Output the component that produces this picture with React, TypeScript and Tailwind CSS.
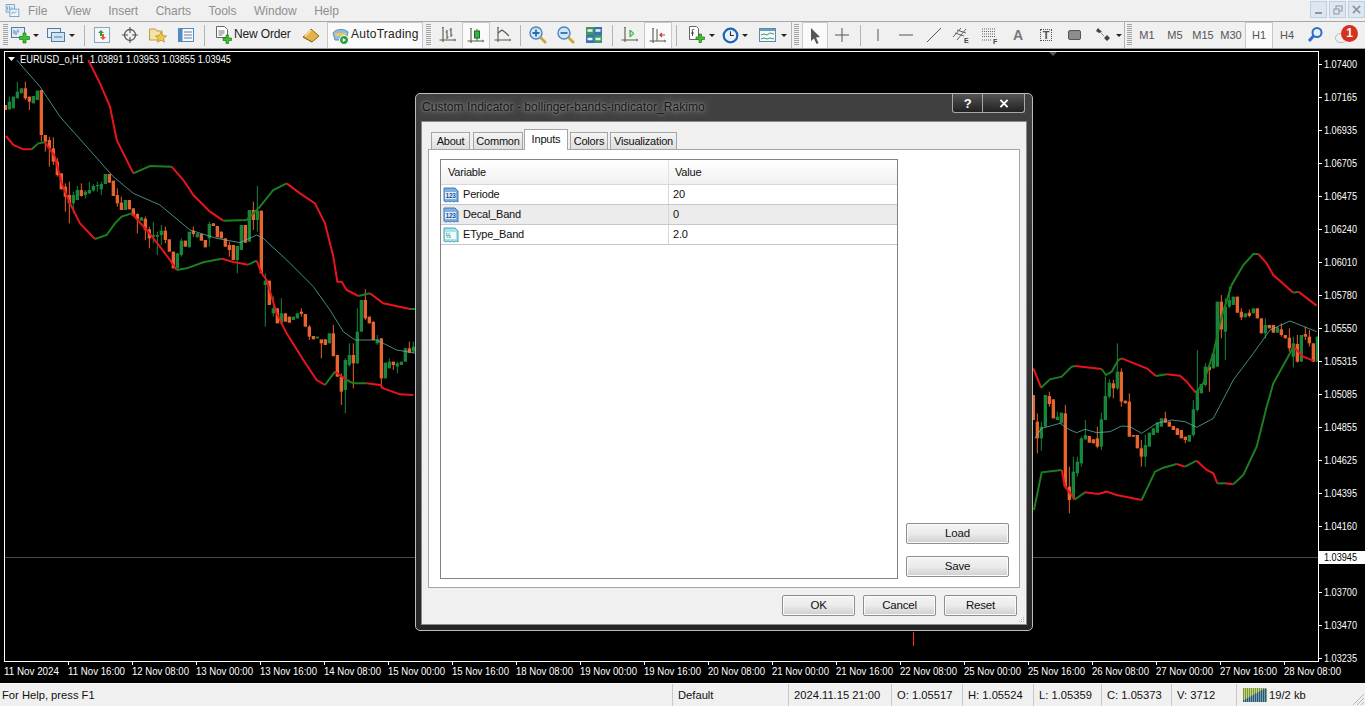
import React from "react";

type C = [number, "g" | "o", number, number, number?, number?];
const L: C[] = [[16,"o",135,150],[28,"g",125,148,110,150],[40,"g",110,145],[52,"g",95,115,65,115],[64,"g",85,100],[76,"o",85,115,65,120],[88,"o",110,125,110,150],[100,"g",108,130],[112,"g",92,120],[124,"o",90,225,90,245],[136,"o",225,245,225,275],[148,"o",240,265,230,320],[160,"o",265,305,232,315],[172,"o",305,345,295,350],[184,"o",340,388],[196,"o",380,410,370,455],[208,"o",405,430,365,490],[220,"g",405,430,395,460],[232,"g",390,420,378,420],[244,"o",390,408,370,410],[256,"g",395,405,390,415],[268,"g",390,400,365,402],[280,"g",378,392,372,395],[292,"g",375,379,365,395],[304,"g",372,388,365,405],[316,"g",342,372],[328,"o",342,368],[340,"o",362,408],[352,"o",405,430,385,440],[364,"o",428,450,410,450],[376,"g",420,450],[388,"o",420,448],[400,"o",445,468],[412,"o",462,478,460,520],[424,"g",472,482],[436,"o",476,510,470,540],[448,"o",508,535,500,565],[460,"g",525,530,485,550],[472,"g",525,530,515,585],[484,"g",512,525,495,555],[496,"o",512,540,500,550],[508,"o",538,575],[520,"o",575,625],[532,"g",580,625],[544,"g",542,585,535,590],[556,"o",542,560],[568,"g",515,562],[580,"o",512,522,500,530],[592,"g",520,532],[604,"o",522,542],[616,"o",540,562],[628,"g",492,535,485,560],[640,"o",490,498],[652,"o",498,532],[664,"o",515,535],[676,"o",535,560],[688,"o",555,570,545,590],[700,"o",555,600],[712,"g",558,600,558,640],[724,"g",495,570],[736,"o",495,548],[748,"g",450,545],[760,"o",450,480,425,510],[772,"g",452,480,378,515],[784,"o",452,640],[796,"g",662,675,640,800],[808,"o",662,735],[820,"g",745,760,710,770],[832,"o",745,790],[844,"g",760,790,715,795],[856,"o",760,785],[868,"o",770,788],[880,"g",770,780],[892,"g",760,775],[904,"o",755,762,745,770],[916,"o",762,800],[928,"o",800,830,795,840],[940,"o",828,838],[952,"g",830,835],[964,"o",838,850,840,895],[976,"o",838,855],[988,"g",820,850],[1000,"o",820,888,795,890],[1012,"o",885,950],[1024,"o",950,995,940,1035],[1036,"g",900,990,895,1060],[1048,"g",885,915,850,920],[1060,"o",885,910,850,985],[1072,"g",815,910,745,912],[1084,"g",720,815],[1096,"o",720,775,688,780],[1108,"o",770,790],[1120,"o",785,840],[1132,"g",838,850,825,855],[1144,"o",835,955,835,985],[1156,"g",908,955],[1168,"g",905,925,895,925],[1180,"o",905,915,905,930],[1192,"g",910,920,905,940],[1204,"g",905,915],[1216,"g",865,905],[1228,"o",865,878,845,880],[1240,"g",860,875,845,880]];

const R: C[] = [[10,"o",465,540],[22,"o",545,595,520,640],[34,"g",560,595,545,632],[46,"g",465,560],[58,"o",468,492,455,500],[70,"o",478,535],[82,"g",530,540,515,540],[94,"g",518,550],[106,"o",520,740,495,745],[118,"o",740,780,680,820],[130,"g",695,775,650,780],[142,"g",665,700,650,710],[154,"g",595,670,590,680],[166,"g",585,598,540,600],[178,"o",588,608],[190,"o",598,610],[202,"o",595,620,560,625],[214,"g",538,620,518,630],[226,"g",468,540,410,540],[238,"g",428,470,418,475],[250,"o",430,445,420,475],[262,"g",395,445,310,450],[274,"o",395,485,385,500],[286,"o",482,490],[298,"o",485,590,460,590],[310,"o",585,590],[322,"o",585,625],[334,"o",625,650,600,680],[346,"g",615,650,585,680],[358,"g",578,620],[370,"g",565,585],[382,"g",548,578],[394,"g",535,560],[406,"o",535,548,515,548],[418,"o",545,560],[430,"o",558,570],[442,"o",565,585],[454,"o",570,595],[466,"o",590,600,590,610],[478,"g",585,605],[490,"g",508,585,480,590],[502,"g",450,510,330,515],[514,"g",432,460],[526,"g",380,435,370,440],[538,"o",380,390,375,455],[550,"g",340,385],[562,"g",185,380],[574,"o",185,268,165,295],[586,"g",200,275,175,360],[598,"g",180,200,140,205],[610,"g",170,195],[622,"o",170,218],[634,"o",215,232,205,240],[646,"g",220,232],[658,"o",218,228,208,232],[670,"g",205,220],[682,"o",205,235],[694,"o",235,280],[706,"g",255,280,235,295],[718,"o",255,265],[730,"o",255,278],[742,"g",262,278],[754,"o",268,285,250,290],[766,"o",285,295],[778,"o",293,325,265,335],[790,"g",310,350,290,382],[802,"o",312,365,285,368],[814,"g",285,365],[826,"o",282,290,260,300],[838,"o",290,310,270,320],[850,"o",310,365],[862,"g",290,365]];

const RED = "#e8141c";
const GRN = "#1c7f1f";
const MID = "#62bdb4";
const bandsL: [string, string][] = [
  [RED,"265,0 300,70 330,140 350,240 400,340"],[GRN,"400,340 450,318 515,320"],[RED,"515,320 550,360 580,405 630,455 670,482"],[GRN,"670,482 740,480 780,440 820,390 860,370"],[RED,"860,370 900,400 945,430 975,490 1000,590 1012,665 1025,665 1040,690 1075,708"],[GRN,"1075,708 1110,700"],[RED,"1110,700 1150,730 1230,747"],[GRN,"1230,747 1250,747"],
  [RED,"18,228 40,255 70,268 95,268"],[GRN,"95,268 115,250 135,247"],[RED,"135,247 165,290 185,370 210,430 240,490 285,537"],[GRN,"285,537 320,525 345,490 365,470 395,460"],[RED,"395,460 440,510 480,560 510,600 530,630"],[GRN,"530,630 560,625 610,607 665,596"],[RED,"665,596 700,606 745,614"],[GRN,"745,614 770,602"],[RED,"770,602 785,640 800,660 830,760 860,820 910,900 950,960 975,975"],[GRN,"975,975 1005,935"],[RED,"1005,935 1040,960"],[GRN,"1040,960 1060,970 1100,970"],[RED,"1100,970 1140,975 1150,985 1200,1003 1240,1005"],
];
const bandsR: [string, string][] = [
  [RED,"10,385 20,410 33,443"],[GRN,"33,443 60,418 95,410 125,380 135,378"],[RED,"135,378 215,387"],[GRN,"215,387 228,405 245,395 265,360 275,355"],[RED,"275,355 350,385 378,408"],[GRN,"378,408 410,403"],[RED,"410,403 450,407 470,425 497,458"],[GRN,"497,458 520,430 550,340 575,230 605,135 640,75 670,42 685,42"],[RED,"685,42 710,70 730,105 790,158"],[GRN,"790,158 805,155"],[RED,"805,155 860,197"],
  [GRN,"12,810 35,697 95,690"],[RED,"95,690 105,740 135,778"],[GRN,"135,778 165,757"],[RED,"165,757 205,762 230,755 260,765 335,780"],[GRN,"335,780 375,695 400,683 440,672"],[RED,"440,672 465,680"],[GRN,"465,680 500,662"],[RED,"500,662 530,690 550,700 562,730"],[GRN,"562,730 585,730"],[RED,"585,730 610,733"],[GRN,"610,733 640,705 680,620 710,500 730,430 780,340 790,320"],[RED,"790,320 820,350 850,362"],
];

const prices: [string, number][] = [["1.07400",64],["1.07165",97],["1.06935",130],["1.06705",163],["1.06475",196],["1.06240",229],["1.06010",262],["1.05780",295],["1.05550",328],["1.05315",361],["1.05085",394],["1.04855",427],["1.04625",460],["1.04395",493],["1.04160",526],["1.03700",592],["1.03470",625],["1.03235",658]];
const dates = ["11 Nov 2024","11 Nov 16:00","12 Nov 08:00","13 Nov 00:00","13 Nov 16:00","14 Nov 08:00","15 Nov 00:00","15 Nov 16:00","18 Nov 08:00","19 Nov 00:00","19 Nov 16:00","20 Nov 08:00","21 Nov 00:00","21 Nov 16:00","22 Nov 08:00","25 Nov 00:00","25 Nov 16:00","26 Nov 08:00","27 Nov 00:00","27 Nov 16:00","28 Nov 08:00"];

function Candles({ data }: { data: C[] }) {
  return (
    <>
      {data.map(([x, k, a, b, hi, lo], i) => {
        const col = k === "g" ? "#14873c" : "#e8642c";
        return (
          <g key={i}>
            <line x1={x} x2={x} y1={hi ?? a} y2={lo ?? b} stroke={col} strokeWidth={3} />
            <rect x={x - 5} y={a} width={10} height={b - a} fill={col} />
          </g>
        );
      })}
    </>
  );
}

function Chart() {
  return (
    <svg viewBox="0 49 1365 634" className="block w-[1365px] h-[634px] bg-black" style={{ fontFamily: "'Liberation Sans',sans-serif" }}>
      <g clipPath="url(#plot)">
        <line x1="5" x2="1318" y1="557.5" y2="557.5" stroke="#4a4a4a" />
        <g transform="translate(0,60) scale(0.33333)">
          <Candles data={L} />
          <polyline points="50,0 120,80 180,170 260,260 340,350 400,400 480,435 570,510 650,535 720,548 770,525 790,535 860,600 940,680 990,750 1030,815 1065,840 1130,840 1190,870 1250,880" fill="none" stroke={MID} strokeWidth="2.2" />
          {bandsL.map(([c, p], i) => <polyline key={i} points={p} fill="none" stroke={c} strokeWidth="6" />)}
        </g>
        <g transform="translate(1030,240) scale(0.33333)">
          <Candles data={R} />
          <polyline points="14,595 35,565 90,550 120,570 140,578 165,568 200,578 240,575 275,558 300,560 335,580 380,550 425,540 465,545 500,562 550,535 610,420 670,340 720,270 780,243 860,275" fill="none" stroke={MID} strokeWidth="2.2" />
          {bandsR.map(([c, p], i) => <polyline key={i} points={p} fill="none" stroke={c} strokeWidth="6" />)}
        </g>
        <rect x="913" y="632" width="1" height="14" fill="#ff3020" />
      </g>
      <defs><clipPath id="plot"><rect x="5" y="52" width="1313" height="608" /></clipPath></defs>
      <line x1="4" x2="1318.5" y1="51.5" y2="51.5" stroke="#fff" />
      <line x1="4.5" x2="4.5" y1="51" y2="661" stroke="#fff" />
      <line x1="1318.5" x2="1318.5" y1="51" y2="661" stroke="#fff" />
      <line x1="4" x2="1319" y1="661.5" y2="661.5" stroke="#fff" />
      <polygon points="1049,52 1057,52 1053,56" fill="#555" />
      <polygon points="8,57 15,57 11.5,61" fill="#fff" />
      <text x="20" y="63" fill="#fff" fontSize="10" textLength="64" lengthAdjust="spacingAndGlyphs">EURUSD_o,H1</text>
      <text x="90" y="63" fill="#fff" fontSize="10" textLength="141" lengthAdjust="spacingAndGlyphs">1.03891 1.03953 1.03855 1.03945</text>
      {prices.map(([p, y]) => (
        <g key={p}>
          <line x1="1319" x2="1322" y1={y + 0.5} y2={y + 0.5} stroke="#fff" />
          <text x="1324" y={y + 3.5} fill="#fff" fontSize="10" textLength="33" lengthAdjust="spacingAndGlyphs">{p}</text>
        </g>
      ))}
      <rect x="1319" y="551" width="46" height="13" fill="#fff" />
      <text x="1324" y="561" fill="#000" fontSize="10" textLength="33" lengthAdjust="spacingAndGlyphs">1.03945</text>
      {dates.map((d, i) => (
        <g key={d}>
          <line x1={68.5 + (i - 1) * 64} x2={68.5 + (i - 1) * 64} y1="662" y2="665" stroke="#fff" opacity={i === 0 ? 0 : 1} />
          <text x={i === 0 ? 4 : 68 + (i - 1) * 64} y="675" fill="#fff" fontSize="10" textLength={i === 0 ? 55 : 57} lengthAdjust="spacingAndGlyphs">{d}</text>
        </g>
      ))}
    </svg>
  );
}

const S = ({ children, vb = "0 0 20 20", c = "w-5 h-5" }: { children: React.ReactNode; vb?: string; c?: string }) => (
  <svg viewBox={vb} className={c} fill="none">{children}</svg>
);
const Caret = () => <span className="ml-[3px] w-0 h-0 border-x-[3px] border-t-[3px] border-x-transparent border-t-[#222]" />;
const Sep = () => <div className="w-[8px] h-[21px] flex justify-center"><div className="w-px h-full bg-[#b4b4b4]" /></div>;
const Grip = () => <div className="w-[5px] h-[22px] bg-[repeating-linear-gradient(#a4a4a4_0_1px,transparent_1px_2px)]" />;

const Plus = () => <path d="M12 9.500h3.500V6H18.500v3.500H22v3h-3.500V16h-3v-3.500H12z" transform="translate(-2.500 2)" fill="#3dc22f" stroke="#1b7d16" strokeWidth=".7" />;
const Bars = ({ kids }: { kids: React.ReactNode }) => (
  <S><path d="M5 3v14M1.500 15h15" stroke="#5a5a4a" strokeWidth="1.1" />{kids}<path d="M16 14l2 1-2 1M4 3l1-1 1 1" stroke="#5a5a4a" strokeWidth=".8" /></S>
);

function Toolbar() {
  const slot = "w-[28px] h-full flex items-center justify-center";
  const active = "bg-[#fafafa] border border-b-0 border-[#c9c9c9]";
  const tf = "w-[28px] h-full flex items-center justify-center text-[11px] text-[#555]";
  return (
    <div className="flex items-center h-[26px] bg-[#f0f0f0] text-[#222]">
      <div className="w-[10px] flex justify-center"><Grip /></div>
      <div className="w-[34px] flex items-center">
        <S><rect x="1.500" y="2.500" width="13" height="10" fill="#dfeaf5" stroke="#4e7ea8" /><path d="M4 5v4M6 6v4M8 4.500v3" stroke="#4e7ea8" /><Plus /></S><Caret />
      </div>
      <div className="w-[36px] flex items-center pl-[2px]">
        <S><rect x="1.500" y="3.500" width="13" height="9" fill="#e6eff8" stroke="#4e7ea8" /><rect x="5.500" y="7.500" width="13" height="9" fill="#d3e2f1" stroke="#4e7ea8" /><path d="M8 12h8" stroke="#4e7ea8" /></S><Caret />
      </div>
      <Sep />
      <div className={slot}><S><rect x="2.500" y="2.500" width="15" height="15" fill="#f2f6fb" stroke="#8aa6c2" /><path d="M9 5L6 8h2v3h2V8h2z" fill="#2d9f36" /><path d="M11 15l3-3h-2V9h-2v3H8z" fill="#e0582b" /></S></div>
      <div className={slot}><S><circle cx="10" cy="10" r="5.500" stroke="#555" strokeWidth="1.3" /><path d="M10 2v6M10 12v6M2 10h6M12 10h6" stroke="#555" strokeWidth="1.1" /></S></div>
      <div className={slot}><S><path d="M1.500 4h6l1.500 2h5v9H1.500z" fill="#f7e3a1" stroke="#b89a50" /><path d="M13 7l1.700 3.600 3.800.4-2.900 2.500.9 3.700-3.500-2-3.500 2 .9-3.700L7.500 11l3.800-.4z" fill="#f3c93f" stroke="#a98a2a" strokeWidth=".7" /></S></div>
      <div className={slot}><S><rect x="2.500" y="3.500" width="15" height="13" fill="#f5f9fd" stroke="#4f8cc2" /><rect x="3" y="4" width="3.500" height="12" fill="#4f8cc2" /><path d="M8 7h8M8 10h8M8 13h8" stroke="#6b7f92" /></S></div>
      <Sep />
      <div className="w-[90px] flex items-center pl-[5px] gap-[1px]">
        <S><path d="M3.500 1.500h8l3 3v8h-11z" fill="#fff" stroke="#666" /><path d="M5.500 6h6M5.500 8h6M5.500 10h4" stroke="#777" /><path d="M10 13h3v-3h2.500v3h3v2.500h-3v3H13v-3h-3z" fill="#3dc22f" stroke="#1b7d16" strokeWidth=".7" /></S>
        <span className="text-[12px] tracking-[-0.15px] whitespace-nowrap mb-[2px]">New Order</span>
      </div>
      <div className="w-[26px] flex justify-center"><S><path d="M2 12l8-8 8 7-7 6z" fill="#e6b04a" stroke="#8a6a20" /><path d="M2 12l9 5" stroke="#8a6a20" /><path d="M4 11l6-6" stroke="#f7dc8e" strokeWidth="2" /></S></div>
      <div className={`w-[96px] h-full ml-[3px] flex items-center pl-[2px] gap-[1px] ${active}`}>
        <S><path d="M3 7c2-4 11-5 15-1l-2 8H5z" fill="#8cc0e2" stroke="#5f8fb0" /><path d="M4 7h13l-3 3H6z" fill="#edc75b" /><circle cx="14" cy="14" r="4.500" fill="#2d9f36" stroke="#fff" /><path d="M12.700 12l3.400 2-3.400 2z" fill="#fff" /></S>
        <span className="text-[12px] whitespace-nowrap tracking-[0.25px] mb-[3px]">AutoTrading</span>
      </div>
      <div className="w-[11px] flex justify-center"><Grip /></div>
      <div className={slot}><Bars kids={<path d="M9 5v9M7.500 7H9M9 12h1.500M13 3v9M11.500 5H13M13 10h1.500" stroke="#5a5a4a" strokeWidth="1.1" />} /></div>
      <div className={`${slot} ${active}`}><Bars kids={<><path d="M11 3v12" stroke="#555" /><rect x="8.500" y="5" width="5" height="7" fill="#2fb545" stroke="#1b6d2a" /></>} /></div>
      <div className="w-[26px] h-full flex items-center justify-center"><Bars kids={<path d="M5 8l4-3 4 3 3 3" stroke="#5a5a4a" strokeWidth="1.1" />} /></div>
      <Sep />
      <div className={slot}><S><circle cx="8" cy="8" r="6" fill="#cfe6fb" stroke="#4f86bb" strokeWidth="1.4" /><path d="M8 4.500v7M4.500 8h7" stroke="#2e6ea8" strokeWidth="1.800" /><path d="M12.500 12.500l5.500 5.500" stroke="#c9a63a" strokeWidth="2.600" /></S></div>
      <div className={slot}><S><circle cx="8" cy="8" r="6" fill="#cfe6fb" stroke="#4f86bb" strokeWidth="1.4" /><path d="M4.500 8h7" stroke="#2e6ea8" strokeWidth="1.800" /><path d="M12.500 12.500l5.500 5.500" stroke="#c9a63a" strokeWidth="2.600" /></S></div>
      <div className={slot}><S><rect x="2" y="2" width="8" height="8" fill="#3a9a62" /><rect x="10" y="2" width="8" height="8" fill="#3b70b4" /><rect x="2" y="10" width="8" height="8" fill="#3b70b4" /><rect x="10" y="10" width="8" height="8" fill="#3a9a62" /><path d="M3.500 5.500h5M11.500 5.500h5M3.500 14h5M11.500 14h5" stroke="#eaf3f5" strokeWidth="2.500" /></S></div>
      <Sep />
      <div className={slot}><Bars kids={<path d="M10 5l4 3.500-4 3.500z" fill="#b5e6a5" stroke="#2d9f36" />} /></div>
      <div className={`${slot} ${active}`}><Bars kids={<><path d="M9 3v12" stroke="#555" /><path d="M12 9h5M14 7l-2 2 2 2" stroke="#c43a3a" strokeWidth="1.200" /></>} /></div>
      <Sep />
      <div className="w-[36px] flex items-center pl-[6px]"><S><path d="M3.500 1.500h7l2 2v11h-9z" fill="#fff" stroke="#666" /><path d="M6 6c0-2 2-2 2-1M5 8h3M6.500 6v5" stroke="#444" /><path d="M10 12h3V9h2.500v3h3v2.500h-3v3H13v-3h-3z" fill="#3dc22f" stroke="#1b7d16" strokeWidth=".7" /></S><Caret /></div>
      <div className="w-[36px] flex items-center pl-[6px]"><S c="w-[17px] h-[17px]"><circle cx="10" cy="10" r="8" fill="#e8f1fa" stroke="#1e64b4" strokeWidth="2.600" /><path d="M10 5v5h4" stroke="#333" strokeWidth="1.300" /></S><Caret /></div>
      <div className="w-[36px] flex items-center pl-[6px]"><S><rect x="1.500" y="3.500" width="16" height="13" fill="#f3f8fc" stroke="#5c8aa8" /><path d="M2 4h15v2H2z" fill="#6a9cc0" /><path d="M3 10l3-1 3 1 3-2 4 1M3 14l3-1 3 1 3-1 4 1" stroke="#3f9a63" /></S><Caret /></div>
      <div className="w-[14px] flex items-center justify-center gap-[2px]"><div className="w-px h-[26px] bg-[#b4b4b4]" /><Grip /></div>
      <div className={`w-[26px] h-full flex items-center justify-center ${active}`}><S><path d="M6 2l9 9-4 .5 2.500 5.500-2 1L9 12.500 6 15z" fill="#555" /></S></div>
      <div className={slot}><S><path d="M10 3v14M3 10h14" stroke="#555" /></S></div>
      <Sep />
      <div className={slot}><S><path d="M10 4v12" stroke="#555" /></S></div>
      <div className={slot}><S><path d="M3 10h14" stroke="#555" /></S></div>
      <div className={slot}><S><path d="M3 17L17 3" stroke="#555" /></S></div>
      <div className={slot}><S><path d="M1 12L9 3M5 15l9-11M3 8l9 3M5 5l9 3" stroke="#555" strokeWidth=".9" /><text x="12" y="18" fontSize="7" fontWeight="700" fill="#444" fontFamily="'Liberation Sans',sans-serif">E</text></S></div>
      <div className={slot}><S><path d="M2 4h14M2 6.500h14M2 9h14M2 11.500h14M2 15h10" stroke="#666" strokeDasharray="1 1" /><text x="13" y="19" fontSize="7" fontWeight="700" fill="#444" fontFamily="'Liberation Sans',sans-serif">F</text></S></div>
      <div className={`${slot} font-bold text-[14px] text-[#777]`}>A</div>
      <div className={slot}><div className="w-[12px] h-[12px] border border-dotted border-[#555] text-[11px] font-bold text-[#555] leading-[11px] text-center">T</div></div>
      <div className={slot}><div className="w-[13px] h-[10px] rounded-[2px] bg-[#8d8d8d] border border-[#555]" /></div>
      <div className="w-[35px] flex items-center pl-[5px]"><S><path d="M5 3l4 4-3 1-3-2zM14 10l3 3-3 3-3-3z" fill="#444" /><path d="M8 8l3 3" stroke="#888" /></S><Caret /></div>
      <div className="w-[10px] flex items-center justify-center gap-[2px]"><div className="w-px h-[26px] bg-[#b4b4b4]" /><Grip /></div>
      <div className={tf}>M1</div>
      <div className={tf}>M5</div>
      <div className={tf}>M15</div>
      <div className={tf}>M30</div>
      <div className={`${tf} ${active}`}>H1</div>
      <div className={tf}>H4</div>
      <div className={slot}><S><circle cx="12" cy="7.500" r="4.500" fill="#e8f1fa" stroke="#2c6fc4" strokeWidth="2" /><path d="M8.500 11L4 16" stroke="#2c6fc4" strokeWidth="3" /></S></div>
      <div className="relative w-[34px] h-full">
        <div className="absolute left-[6px] top-[11px] w-[12px] h-[10px] rounded-full border border-[#bbb] bg-[#eee]" />
        <div className="absolute left-[12px] top-[3px] w-[17px] h-[17px] rounded-full bg-[#d8301f] text-white text-[12px] font-bold leading-[17px] text-center">1</div>
      </div>
    </div>
  );
}

function WinBtn({ children }: { children: React.ReactNode }) {
  return <div className="w-[17px] h-[17px] bg-[#dde7f1] border border-[#bcd0e3] flex items-center justify-center text-[#8b97a3]">{children}</div>;
}

function MenuBar() {
  return (
    <div className="h-[22px] flex items-center bg-[#f0f0f0] border-b border-[#a8a8a8]">
      <div className="w-[28px] pl-[5px]">
        <S c="w-[15px] h-[16px]"><rect x="1.500" y="1.500" width="11" height="10" fill="#e4eef8" stroke="#5f8fb8" /><rect x="6.500" y="7.500" width="12" height="10" fill="#eef5fb" stroke="#5f8fb8" /><path d="M3.500 4v5M6 3v5M9 5v2M8.500 14l2-3 2 2 3-3" stroke="#5f8fb8" /></S>
      </div>
      <div className="flex text-[12px] text-[#8e8e8e] gap-[17.500px]">
        <span>File</span><span>View</span><span>Insert</span><span>Charts</span><span>Tools</span><span>Window</span><span>Help</span>
      </div>
      <div className="ml-auto flex gap-[2px] mb-[2px]">
        <WinBtn><div className="w-[7px] h-[2px] bg-[#8b97a3] mt-[6px]" /></WinBtn>
        <WinBtn><svg viewBox="0 0 10 10" className="w-[10px] h-[10px]" fill="none" stroke="#8b97a3"><rect x="3" y="1" width="6" height="5" /><rect x="1" y="4" width="5" height="5" fill="#dde7f1" /></svg></WinBtn>
        <WinBtn><svg viewBox="0 0 10 10" className="w-[9px] h-[9px]" stroke="#8b97a3" strokeWidth="2"><path d="M1 1l8 8M9 1L1 9" /></svg></WinBtn>
      </div>
    </div>
  );
}

function Status() {
  const cell = "h-full flex items-center border-l border-[#c8c8c8] pl-[5px] whitespace-nowrap";
  return (
    <div className="h-[23px] flex items-center bg-[#f0f0f0] text-[11.200px] text-[#111] border-t border-[#fafafa]">
      <div className="w-[672px] pl-[2px]">For Help, press F1</div>
      <div className={`${cell} w-[116px]`}>Default</div>
      <div className={`${cell} w-[103px]`}>2024.11.15 21:00</div>
      <div className={`${cell} w-[71px]`}>O: 1.05517</div>
      <div className={`${cell} w-[71px]`}>H: 1.05524</div>
      <div className={`${cell} w-[68px]`}>L: 1.05359</div>
      <div className={`${cell} w-[70px]`}>C: 1.05373</div>
      <div className={`${cell} w-[65px]`}>V: 3712</div>
      <div className={`${cell} flex-1 gap-[2px] pl-[6px] relative`}>
        <svg viewBox="0 0 24 14" className="w-[24px] h-[14px]">
          {Array.from({ length: 12 }).map((_, i) => (
            <g key={i}>
              <rect x={i * 2} y={0} width={1.400} height={14} fill="#7f9a1e" />
              <rect x={i * 2} y={Math.max(1, 12 - i * 1.1)} width={1.400} height={14} fill="#1d5a8a" />
            </g>
          ))}
        </svg>
        <span>19/2 kb</span>
        <svg viewBox="0 0 14 14" className="absolute right-0 bottom-0 w-[14px] h-[14px]" stroke="#b5b5b5"><path d="M13 2L2 13M13 6l-7 7M13 10l-3 3" /></svg>
      </div>
    </div>
  );
}

function ParamIcon({ half }: { half?: boolean }) {
  return (
    <svg viewBox="0 0 16 16" className="w-[16px] h-[16px] mr-[4px] shrink-0">
      <path d="M1 1h11l3 3v11l-2-1-2 1-2-1-2 1-2-1-2 1-2-1z" fill={half ? "#a9e4e8" : "#7fb0e2"} stroke={half ? "#4aa3b8" : "#3f7ab8"} />
      <rect x="2" y="5" width="11" height="7" fill="#fff" opacity=".8" />
      <text x="2.500" y="11" fontSize="6.500" fontWeight="700" fill={half ? "#2f8fa3" : "#1d4f8f"} fontFamily="'Liberation Sans',sans-serif">{half ? "½" : "123"}</text>
    </svg>
  );
}

function Row({ name, value, half, shade }: { name: string; value: string; half?: boolean; shade?: boolean }) {
  return (
    <div className={`h-[20px] flex border-b border-[#c8c8c8] ${shade ? "bg-[#ececec]" : "bg-white"}`}>
      <div className="w-[228px] flex items-center pl-[2px] border-r border-[#d8d8d8]"><ParamIcon half={half} />{name}</div>
      <div className="flex-1 flex items-center pl-[4px]">{value}</div>
    </div>
  );
}

const btn = "flex items-center justify-center h-[21px] rounded-[2px] border border-[#8e8e8e] bg-gradient-to-b from-[#f4f4f4] via-[#ebebeb] to-[#cfcfcf] text-[11.500px] text-[#111] shadow-[inset_0_0_0_1px_#fbfbfb]";

function Dialog() {
  const tab = "h-[17px] flex items-center justify-center border border-b-0 border-[#a5a5a5] bg-gradient-to-b from-[#f4f4f4] to-[#dedede]";
  return (
    <div className="absolute left-[415px] top-[93px] w-[618px] h-[538px] rounded-[5px] border border-[#bdbdbd] bg-gradient-to-b from-[#414141] to-[#262626] p-[5px] pt-0 flex flex-col text-[11px] tracking-[-0.2px] text-[#111]" style={{ fontFamily: "'Liberation Sans',sans-serif" }}>
      <div className="h-[27px] shrink-0 flex items-start relative">
        <div className="pl-[1px] pt-[4px] text-[12px] tracking-[0.05px] text-[#161616] [text-shadow:0_0_3px_#9a9a9a,0_0_8px_#a8a8a8] whitespace-nowrap">Custom Indicator - bollinger-bands-indicator_Rakimo</div>
        <div className="absolute right-[2px] top-0 flex">
          <div className="w-[31px] h-[19px] rounded-bl-[3px] border border-t-0 border-[#a8a8a8] bg-gradient-to-b from-[#555] to-[#222] text-white font-bold text-[13px] flex items-center justify-center leading-none">?</div>
          <div className="w-[42px] h-[19px] rounded-br-[3px] border border-l-0 border-t-0 border-[#a8a8a8] bg-gradient-to-b from-[#555] to-[#222] flex items-center justify-center">
            <svg viewBox="0 0 10 10" className="w-[10px] h-[9px]" stroke="#fff" strokeWidth="2.200"><path d="M1 1l8 8M9 1L1 9" /></svg>
          </div>
        </div>
      </div>
      <div className="flex-1 bg-[#f0f0f0] border border-[#8a8a8a] pt-[8px] px-[6px] flex flex-col relative">
        <div className="flex items-end pl-[3px] h-[19px] relative z-10">
          <div className={`${tab} w-[39px] mr-[3px]`}>About</div>
          <div className={`${tab} w-[50px] mr-[1px]`}>Common</div>
          <div className="h-[21px] w-[44px] flex items-start pt-[1px] justify-center border border-b-0 border-[#a5a5a5] bg-white -mb-px mr-[2px]">Inputs</div>
          <div className={`${tab} w-[38px] mr-[2px]`}>Colors</div>
          <div className={`${tab} w-[67px]`}>Visualization</div>
        </div>
        <div className="h-[439px] w-[592px] bg-white border border-[#a5a5a5] pl-[11px] pt-[9px] flex gap-[8px]">
          <div className="w-[458px] h-[420px] border border-[#828282] flex flex-col">
            <div className="h-[25px] flex bg-gradient-to-b from-white to-[#f1f1f1] border-b border-[#d8d8d8]">
              <div className="w-[228px] pl-[7px] flex items-center border-r border-[#e3e3e3]">Variable</div>
              <div className="pl-[6px] flex items-center">Value</div>
            </div>
            <Row name="Periode" value="20" />
            <Row name="Decal_Band" value="0" shade />
            <Row name="EType_Band" value="2.0" half />
          </div>
          <div className="w-[103px] h-[420px] flex flex-col justify-end gap-[12px] pb-[2px]">
            <div className={btn}>Load</div>
            <div className={btn}>Save</div>
          </div>
        </div>
        <div className="flex justify-end gap-[8px] pt-[7px] pr-[3px]">
          <div className={`${btn} w-[73px]`}>OK</div>
          <div className={`${btn} w-[73px]`}>Cancel</div>
          <div className={`${btn} w-[73px]`}>Reset</div>
        </div>
        <svg viewBox="0 0 8 8" className="absolute right-0 bottom-0 w-[8px] h-[8px]" fill="#b0b0b0"><rect x="5" y="1" width="1" height="1" /><rect x="3" y="3" width="1" height="1" /><rect x="5" y="3" width="1" height="1" /><rect x="1" y="5" width="1" height="1" /><rect x="3" y="5" width="1" height="1" /><rect x="5" y="5" width="1" height="1" /></svg>
      </div>
    </div>
  );
}

export default function App() {
  return (
    <div className="relative w-[1365px] h-[706px] overflow-hidden bg-[#f0f0f0] flex flex-col" style={{ fontFamily: "'Liberation Sans',sans-serif" }}>
      <MenuBar />
      <Toolbar />
      <div className="h-px bg-[#9a9a9a]" />
      <Chart />
      <Status />
      <Dialog />
    </div>
  );
}
